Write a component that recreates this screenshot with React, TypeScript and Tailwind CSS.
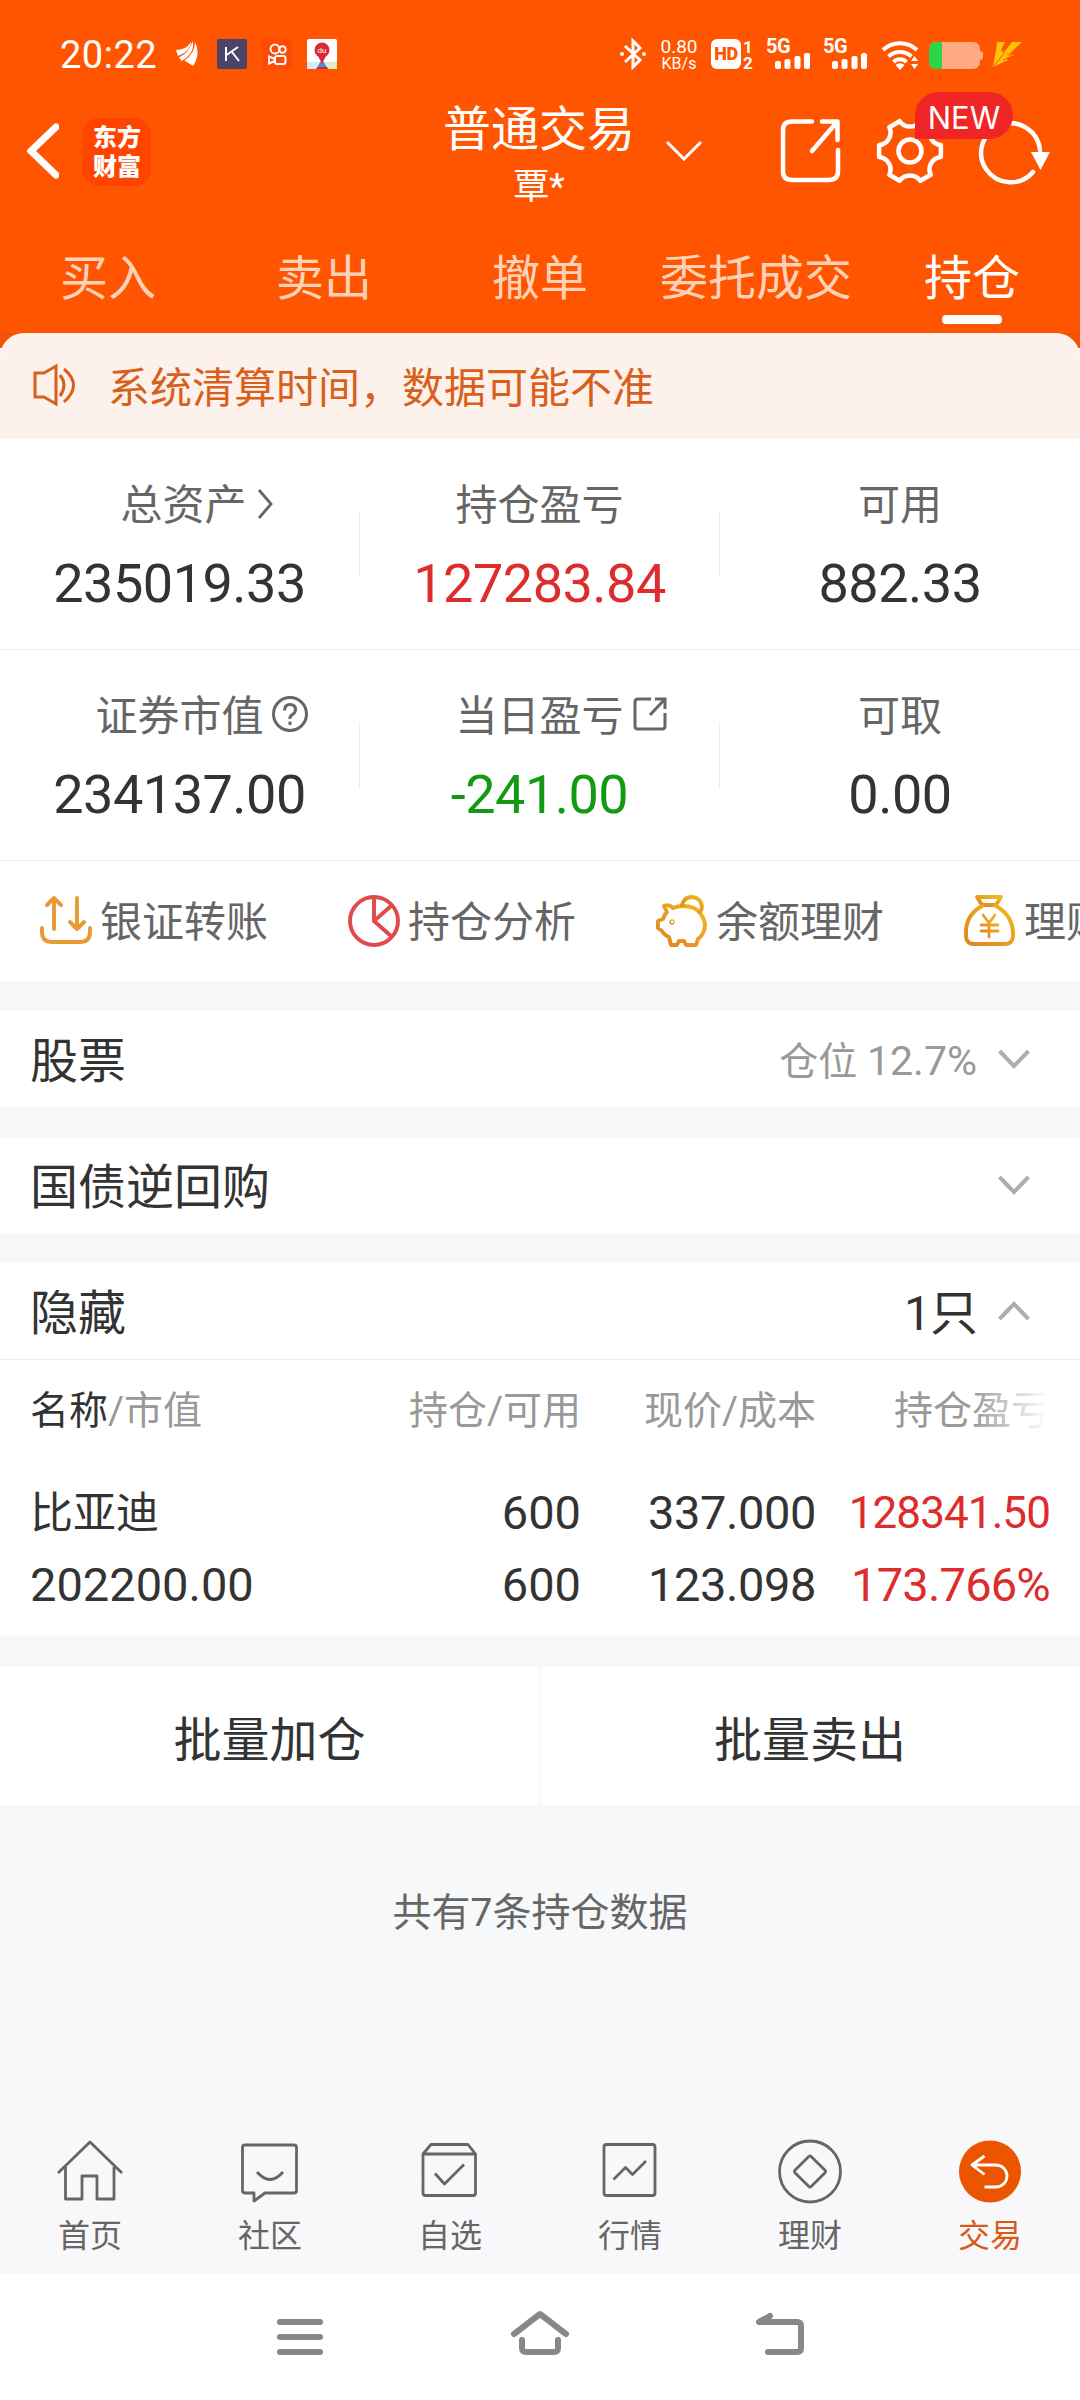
import clsx from "clsx";
import type { ReactNode } from "react";

const tabs = ["买入", "卖出", "撤单", "委托成交", "持仓"];

export default function App() {
  return (
    <main className="w-[1080px] h-[2400px] flex flex-col overflow-hidden bg-[#f7f8fa] text-[#333] font-[Roboto,'Noto_Sans_CJK_SC',sans-serif]">
      <div className="bg-[#ff5500] h-[333px] shrink-0">
        <StatusBar />
        <TitleBar />
        <div className="grid grid-cols-5 h-[113px]">
          {tabs.map((tab) => (
            <Tab key={tab} label={tab} active={tab === "持仓"} />
          ))}
        </div>
      </div>
      <Notice />
      <Summary />
      <QuickActions />
      <div className="mt-[30px] flex flex-col gap-[30px]">
        <Section title="股票">
          <span className="pt-[5px] text-[39px] text-[#999]">
            仓位 <span className="text-[41px]">12.7%</span>
          </span>
        </Section>
        <Section title="国债逆回购" />
        <div className="bg-white h-[373px]">
          <Section title="隐藏" open>
            <span className="pt-[5px] text-[48px] tracking-[-1px]">1只</span>
          </Section>
          <Holdings />
        </div>
      </div>
      <div className="mt-[31px] h-[138px] shrink-0 bg-white grid grid-cols-2 text-[48px] text-center leading-[138px]">
        <button className="border-r border-[#f5f5f5] pt-[5px]">批量加仓</button>
        <button className="pt-[5px]">批量卖出</button>
      </div>
      <p className="mt-[78px] text-center text-[39px] leading-[60px] text-[#666]">
        共有7条持仓数据
      </p>
      <BottomTabs />
      <SystemNav />
    </main>
  );
}

function StatusBar() {
  return (
    <div className="h-[92px] pt-[38px] pl-[60px] flex items-start text-white">
      <span className="w-[116px] text-[38px] leading-[34px] tracking-[0.500px]">
        20:22
      </span>
      <svg className="w-[22px] h-8 mr-[19px]" viewBox="0 0 22 32" fill="#fff">
        <path d="M0 12q10 0 15-8 0 9-13 14z" />
        <path d="M16.500 3q3 12-11 20L3 19.500Q14 14 16.500 3z" />
        <path d="M19 4q6 12-2 24L8.500 22.500Q19 15 19 4z" />
      </svg>
      <svg className="w-[30px] h-[31px] mr-[15px]" viewBox="0 0 30 31">
        <rect y="1" width="30" height="30" rx="2" fill="#4c4368" />
        <path
          d="M9 9v14M21 9L9.500 17M15 14l7 9"
          fill="none"
          stroke="#fff"
          strokeWidth="2"
        />
      </svg>
      <svg className="w-[30px] h-[31px] mr-[15px]" viewBox="0 0 30 31">
        <rect y="1" width="30" height="30" rx="2" fill="#ff4906" />
        <g fill="none" stroke="#fff" strokeWidth="1.900">
          <circle cx="13" cy="11" r="4.500" />
          <circle cx="20.500" cy="11.500" r="3.300" />
          <rect x="13" y="18" width="10.500" height="8" rx="2" />
          <path d="M13 21l-6-2.500v7l6-2.500" />
        </g>
      </svg>
      <svg className="w-[30px] h-[31px]" viewBox="0 0 30 31">
        <rect y="1" width="30" height="30" rx="2" fill="#fff" />
        <path d="M0 24h12l-3 7H0z" fill="#d5eaf6" />
        <path d="M18 24h12v7h-9z" fill="#dfeebb" />
        <path d="M13 24h4l4 7H9z" fill="#4c8fdc" />
        <path d="M11 29h9l1 2H9z" fill="#d42b30" />
        <circle cx="15" cy="12" r="7.500" fill="#dc2a35" />
        <path d="M11 18h8l-4 8z" fill="#dc2a35" />
        <text x="15" y="15" textAnchor="middle" fontSize="8" fill="#fff">
          du
        </text>
      </svg>
      <svg className="w-[26px] h-8 ml-[283px]" viewBox="0 0 26 32">
        <path
          d="M5 8l15 14-7 7V3l7 7L5 24"
          fill="none"
          stroke="#fff"
          strokeWidth="3"
        />
        <circle cx="2" cy="16" r="2" fill="#fff" />
        <circle cx="24" cy="16" r="2" fill="#fff" />
      </svg>
      <div className="w-[50px] ml-[8px] text-center">
        <p className="text-[19px] leading-[18px]">0.80</p>
        <p className="text-[16px] leading-4">KB/s</p>
      </div>
      <span className="ml-[7px] mt-px w-[30px] h-[30px] rounded-md bg-white text-[#ff5500] text-[18px] leading-[30px] font-black text-center tracking-[-0.500px]">
        HD
      </span>
      <div className="w-[12px] ml-px pt-px text-[17px] font-bold leading-4 text-center">
        <p>1</p>
        <p>2</p>
      </div>
      <Signal />
      <Signal />
      <svg className="w-[38px] h-8 ml-[13px]" viewBox="0 0 38 32">
        <g fill="none" stroke="#fff" strokeWidth="4">
          <path d="M2 12a25 25 0 0 1 34 0" />
          <path d="M7.500 18.500a17 17 0 0 1 23 0" />
          <path d="M12.500 24a9 9 0 0 1 13 0" />
        </g>
        <path d="M14.500 27a7 7 0 0 1 9 0L19 32z" fill="#fff" />
        <path
          d="M30 23l3.500-5 3.500 5zM30 26l3.500 5 3.500-5z"
          fill="#fff"
          stroke="#ff5500"
          strokeWidth="1.500"
          paintOrder="stroke"
        />
      </svg>
      <div className="ml-[10px] mt-[4px] flex items-center">
        <div className="w-[51px] h-[27px] rounded-[7px] bg-[#ffaa80] overflow-hidden">
          <div className="w-[13px] h-full bg-[#2bd44a]" />
        </div>
        <div className="w-[3px] h-[9px] rounded-r bg-[#ffaa80]" />
      </div>
      <svg className="w-[30px] h-[25px] ml-[9px] mt-[4px]" viewBox="0 0 30 25">
        <path d="M5 0h8L9 8l4 1L20 0h10L17 12l5 1-8 4 2 1L1 25l2-12 1-4z" fill="#ffc20a" />
        <path d="M9 9l4 1L2 24M15 12l5 2-9 4" fill="none" stroke="#ff5500" />
      </svg>
    </div>
  );
}

function Signal() {
  return (
    <div className="relative w-[45px] h-8 ml-[12px] shrink-0">
      <span className="block text-[20px] leading-[17px] font-bold tracking-[-0.500px]">
        5G
      </span>
      <svg
        className="absolute left-[9px] top-[15px] w-9 h-4"
        viewBox="0 0 36 16"
        fill="#fff"
      >
        <rect x="0" y="8" width="6" height="8" rx="2" />
        <rect x="9.500" y="6" width="6" height="10" rx="2" />
        <rect x="19.500" y="3" width="6" height="13" rx="2" />
        <rect x="29" y="0" width="6" height="16" rx="2" />
      </svg>
    </div>
  );
}

// outline of the six-toothed settings wheel
const gearPath =
  [0, 60, 120, 180, 240, 300]
    .map((deg, i) => {
      const point = (d: number) => {
        const rad = (d * Math.PI) / 180;
        return `${(34 + 31.5 * Math.cos(rad)).toFixed(1)} ${(34 + 31.5 * Math.sin(rad)).toFixed(1)}`;
      };
      const start = i === 0 ? `M${point(deg - 11)}` : "";
      return `${start}L${point(deg + 11)}A12.500 12.500 0 0 0 ${point(deg + 49)}`;
    })
    .join("") + "z";

function TitleBar() {
  return (
    <div className="relative h-[128px] flex text-white">
      <svg className="ml-[27px] mt-[31px] w-8 h-14" viewBox="0 0 32 56">
        <path
          d="M29 4L4 28l25 24"
          fill="none"
          stroke="#fff"
          strokeWidth="7"
          strokeLinecap="round"
        />
      </svg>
      <div className="ml-6 mt-[26px] w-[68px] h-[68px] rounded-[16px] bg-[#ff4400] pt-[3px] text-center text-[24px] leading-[29px] font-black font-['Noto_Sans_CJK_SC',sans-serif]">
        <p>东方</p>
        <p>财富</p>
      </div>
      <div className="w-[200px] ml-[288px] pt-[3px] text-center">
        <h1 className="text-[48px] leading-[70px]">普通交易</h1>
        <p className="text-[36px] leading-[44px]">覃*</p>
      </div>
      <svg className="ml-[27px] mt-[48px] w-9 h-[21px]" viewBox="0 0 36 21">
        <path d="M1 2l17 17L35 2" fill="none" stroke="#fff" strokeWidth="3" />
      </svg>
      <svg
        className="ml-[78px] mt-[26px] w-[62px] h-[66px]"
        viewBox="0 0 62 66"
        fill="none"
        stroke="#fff"
        strokeWidth="4.500"
        strokeLinecap="round"
        strokeLinejoin="round"
      >
        <path d="M32 3.500H12Q3 3.500 3 12v41q0 9 9 9h37q9 0 9-9V32" />
        <path d="M42 3.500h15.500V22M57 4L32 33" />
      </svg>
      <svg
        className="ml-[34px] mt-[25px] w-[68px] h-[68px]"
        viewBox="0 0 68 68"
        fill="none"
        stroke="#fff"
        strokeWidth="4.500"
        strokeLinejoin="round"
      >
        <path d={gearPath} />
        <circle cx="34" cy="34" r="11.500" />
      </svg>
      <svg className="ml-[34px] mt-[23px] w-[74px] h-[74px]" viewBox="0 0 74 74">
        <path
          d="M55 57A29.500 29.500 0 1 1 62 35"
          fill="none"
          stroke="#fff"
          strokeWidth="4.500"
          strokeLinecap="round"
        />
        <path d="M53 37h19l-9.500 18z" fill="#fff" />
      </svg>
      <span className="absolute left-[915px] top-0 w-[98px] h-[47px] rounded-[24px] rounded-bl-none bg-[#f02525] text-center text-[31px] leading-[51px] font-[Inter,sans-serif]">
        NEW
      </span>
    </div>
  );
}

function Tab({ label, active }: { label: string; active: boolean }) {
  return (
    <div className="flex flex-col items-center pt-[24px]">
      <span
        className={clsx(
          "text-[48px] leading-[70px]",
          active ? "text-white" : "text-[#ffd2b8]"
        )}
      >
        {label}
      </span>
      {active && <span className="mt-px w-[60px] h-[9px] rounded bg-white" />}
    </div>
  );
}

function Notice() {
  return (
    <div className="shrink-0 h-[106px] bg-[linear-gradient(#f05303_15px,#fff_15px)]">
      <div className="h-full rounded-t-[24px] bg-[#fcf1eb] flex items-center text-[#d95f1c]">
        <svg
          className="ml-[33px] -mt-[2px] w-11 h-11"
          viewBox="0 0 44 44"
          fill="none"
          stroke="currentColor"
          strokeWidth="3"
        >
          <path d="M2 10h9L23 3v38l-12-7H2zM27 12q8 10 0 21M31 6q19 16 0 33" />
        </svg>
        <span className="ml-[31px] pt-[5px] text-[42px] leading-[60px]">
          系统清算时间，数据可能不准
        </span>
      </div>
    </div>
  );
}

function Summary() {
  return (
    <div className="bg-white shrink-0">
      <div className="grid grid-cols-3 h-[211px] border-b border-[#ececec]">
        <Figure
          label="总资产"
          value="235019.33"
          labelClass="pl-[8px]"
          icon={
            <svg className="ml-[10px] mt-[12px] w-4 h-8 shrink-0" viewBox="0 0 16 32">
              <path
                d="M2 2l12 14L2 30"
                fill="none"
                stroke="#666"
                strokeWidth="2.800"
              />
            </svg>
          }
        />
        <Figure
          label="持仓盈亏"
          value="127283.84"
          valueClass="text-[#dd2c2c]"
        />
        <Figure label="可用" value="882.33" last />
      </div>
      <div className="grid grid-cols-3 h-[211px] border-b border-[#ececec]">
        <Figure
          label="证券市值"
          value="234137.00"
          icon={
            <svg
              className="ml-[8px] mt-[9px] w-9 h-9 shrink-0"
              viewBox="0 0 36 36"
              fill="none"
              stroke="#666"
              strokeWidth="3"
            >
              <circle cx="18" cy="18" r="16.500" />
              <path d="M12.500 14.500q0-6 5.500-6t5.500 5q0 3-3 5T18 23M18 25.500v3.500" />
            </svg>
          }
        />
        <Figure
          label="当日盈亏"
          value="-241.00"
          valueClass="text-[#139a12]"
          icon={
            <svg
              className="ml-[9px] mt-[10px] w-[34px] h-[34px] shrink-0"
              viewBox="0 0 34 34"
              fill="none"
              stroke="#666"
              strokeWidth="3"
            >
              <path d="M18 2H5Q2 2 2 5v24q0 3 3 3h24q3 0 3-3V16M22 2h10v10M32 2L17 18" />
            </svg>
          }
        />
        <Figure label="可取" value="0.00" last />
      </div>
    </div>
  );
}

function Figure({
  label,
  value,
  icon,
  last,
  labelClass,
  valueClass,
}: {
  label: string;
  value: string;
  icon?: ReactNode;
  last?: boolean;
  labelClass?: string;
  valueClass?: string;
}) {
  return (
    <div className="flex items-center">
      <div className="flex-1 h-full flex flex-col items-center pt-[37px]">
        <div
          className={clsx(
            "flex text-[42px] leading-[60px] text-[#666]",
            labelClass
          )}
        >
          <span>{label}</span>
          {/* zero width, so the label itself stays centred */}
          <span className="w-0 flex">{icon}</span>
        </div>
        <span
          className={clsx(
            "mt-[16px] text-[54px] leading-[64px] tracking-[-0.500px]",
            valueClass
          )}
        >
          {value}
        </span>
      </div>
      {!last && <div className="w-px h-[66px] bg-[#ececec]" />}
    </div>
  );
}

const actions = [
  {
    label: "银证转账",
    icon: (
      <g stroke="#e99a35">
        <path d="M14 34V3M7 10l7-7 7 7M37 3v31M30 27l7 7 7-7" />
        <path d="M2 33v4q0 10 10 10h28q10 0 10-10v-4" />
      </g>
    ),
  },
  {
    label: "持仓分析",
    icon: (
      <g stroke="#e24a4a">
        <circle cx="26" cy="26" r="24" />
        <path d="M26 2v24l17-15M26 26l17 15" />
      </g>
    ),
  },
  {
    label: "余额理财",
    icon: (
      <g stroke="url(#gold)">
        <path d="M8 11q5-2 9 2 5-2 10-2 12 0 17 7 8 10 3 20-2 4-5 6l-2 6h-10l-2-4h-5l-2 4h-6l-2-8q-5-2-7-6l-4-3v-7l5-2q1-4 4-7z" />
        <path d="M26 10Q28 2 36 2q9 1 10 9 0 4-2 6" />
        <circle cx="16" cy="27" r=".7" />
      </g>
    ),
  },
  {
    label: "理财产品",
    icon: (
      <g stroke="url(#gold)">
        <path d="M13 2h24l-5 8H18z" />
        <path d="M18 11Q2 20 2 37v5q1 7 8 7h31q7 0 8-7v-5Q48 20 32 11" />
        <path d="M19 20l6 8 6-8M25 28v14M17 30h17M17 36h17" strokeWidth="2.800" />
      </g>
    ),
  },
];

function QuickActions() {
  return (
    <div className="h-[120px] shrink-0 bg-white pl-[40px] flex overflow-hidden">
      {actions.map(({ label, icon }) => (
        <div key={label} className="w-[308px] shrink-0 flex items-center">
          <svg
            className="w-[52px] h-[52px] -mt-px"
            viewBox="0 0 52 52"
            fill="none"
            strokeWidth="3.900"
            strokeLinecap="round"
            strokeLinejoin="round"
          >
            <defs>
              <linearGradient id="gold" x1="0" y1="1" x2="1" y2="0">
                <stop offset="0" stopColor="#e08420" />
                <stop offset="1" stopColor="#f0b820" />
              </linearGradient>
            </defs>
            {icon}
          </svg>
          <span className="ml-[8px] pt-[3px] text-[42px] text-[#666] whitespace-nowrap">
            {label}
          </span>
        </div>
      ))}
    </div>
  );
}

function Section({
  title,
  open,
  children,
}: {
  title: string;
  open?: boolean;
  children?: ReactNode;
}) {
  return (
    <div className="h-[96px] bg-white pl-[30px] pr-[50px] flex items-center">
      <h2 className="flex-1 pt-[5px] text-[48px]">{title}</h2>
      {children}
      <svg
        className={clsx("ml-[21px] w-8 h-5", open && "rotate-180")}
        viewBox="0 0 32 20"
      >
        <path d="M1.500 2L16 17 30.500 2" fill="none" stroke="#aeaeae" strokeWidth="4" />
      </svg>
    </div>
  );
}

function Holdings() {
  return (
    <div className="border-t border-[#ececec]">
      <div className="relative pt-[2px] h-[98px] grid grid-cols-[320px_231px_235px_1fr] pl-[30px] text-[39px] leading-[98px] text-right text-[#999] overflow-hidden">
        <span className="text-left">
          <span className="text-[#333]">名称</span>/市值
        </span>
        <span>持仓/可用</span>
        <span>现价/成本</span>
        <span className="text-left pl-[78px] whitespace-nowrap">持仓盈亏</span>
        <div className="absolute right-0 top-0 w-[108px] h-full bg-[linear-gradient(90deg,#fff0,#fff_76px)]" />
      </div>
      <div className="mt-[19px] grid grid-cols-[320px_231px_235px_1fr] pl-[30px] pr-[30px] text-[47px] leading-[72px] text-right">
        <span className="text-left text-[43px]">比亚迪</span>
        <span>600</span>
        <span className="tracking-[-0.400px]">337.000</span>
        <span className="text-[44px] tracking-[-0.900px] text-[#dd2c2c]">
          128341.50
        </span>
        <span className="text-left">202200.00</span>
        <span>600</span>
        <span className="tracking-[-0.400px]">123.098</span>
        <span className="tracking-[-0.800px] text-[#dd2c2c]">173.766%</span>
      </div>
    </div>
  );
}

const navItems = [
  {
    label: "首页",
    icon: (
      <path d="M0 33L32 2l32 31M7.500 27v32H24V36h15v23h17V27" />
    ),
  },
  {
    label: "社区",
    icon: (
      <>
        <path d="M7 5h49q2.500 0 2.500 2.500v43q0 2.500-2.500 2.500H27l-11 8v-8H7q-2.500 0-2.500-2.500v-43Q4.500 5 7 5z" />
        <path d="M19 32q13 15 26 0" />
      </>
    ),
  },
  {
    label: "自选",
    icon: (
      <path d="M5 14L13 4.500h37L57.500 14v39q0 2.500-2.500 2.500H7.500Q5 55.500 5 53V14h52.500M17 33.500L26.500 44 46 24.500" />
    ),
  },
  {
    label: "行情",
    icon: (
      <>
        <rect x="6" y="4.500" width="51" height="51" rx="2.500" />
        <path d="M15.500 39.500l12-12 7 7L48 21" />
      </>
    ),
  },
  {
    label: "理财",
    icon: (
      <>
        <circle cx="32" cy="31.500" r="30.500" />
        <rect x="20.500" y="20" width="23" height="23" rx="2" transform="rotate(45 32 31.500)" />
      </>
    ),
  },
  {
    label: "交易",
    icon: (
      <>
        <circle cx="32" cy="31.500" r="31" fill="#eb5500" stroke="none" />
        <path
          d="M26.500 16L14 25l12.500 9.500M14 25h24a11 11 0 0 1 0 22H26.500"
          stroke="#fff"
        />
      </>
    ),
  },
];

function BottomTabs() {
  return (
    <div className="mt-auto h-[160px] shrink-0 grid grid-cols-6 pt-[26px] bg-[#f8f8fa]">
      {navItems.map(({ label, icon }) => (
        <div key={label} className="flex flex-col items-center">
          <svg
            className="w-16 h-16 overflow-visible"
            viewBox="0 0 64 64"
            fill="none"
            stroke="#666"
            strokeWidth="2.800"
            strokeLinejoin="round"
          >
            {icon}
          </svg>
          <span
            className={clsx(
              "mt-[8px] text-[32px] leading-[48px]",
              label === "交易" ? "text-[#d95a17]" : "text-[#666]"
            )}
          >
            {label}
          </span>
        </div>
      ))}
    </div>
  );
}

function SystemNav() {
  return (
    <div className="h-[126px] shrink-0 bg-white pt-[34px] flex justify-center gap-[180px]">
      <svg
        className="w-[60px] h-[50px]"
        viewBox="0 0 60 50"
        fill="none"
        stroke="#888"
        strokeWidth="6"
        strokeLinecap="round"
      >
        <path d="M10 14h40M10 29h40M10 44h40" />
      </svg>
      <svg
        className="w-[60px] h-[50px]"
        viewBox="0 0 60 50"
        fill="none"
        stroke="#888"
        strokeWidth="6"
        strokeLinecap="round"
        strokeLinejoin="round"
      >
        <path d="M4 26L30 6l26 20M12 32v8q0 4 4 4h28q4 0 4-4v-8" />
      </svg>
      <svg
        className="w-[60px] h-[50px]"
        viewBox="0 0 60 50"
        fill="none"
        stroke="#888"
        strokeWidth="6"
        strokeLinecap="round"
        strokeLinejoin="round"
      >
        <path d="M20 8L9 14h38q4 0 4 4v22q0 4-4 4H18" />
      </svg>
    </div>
  );
}
